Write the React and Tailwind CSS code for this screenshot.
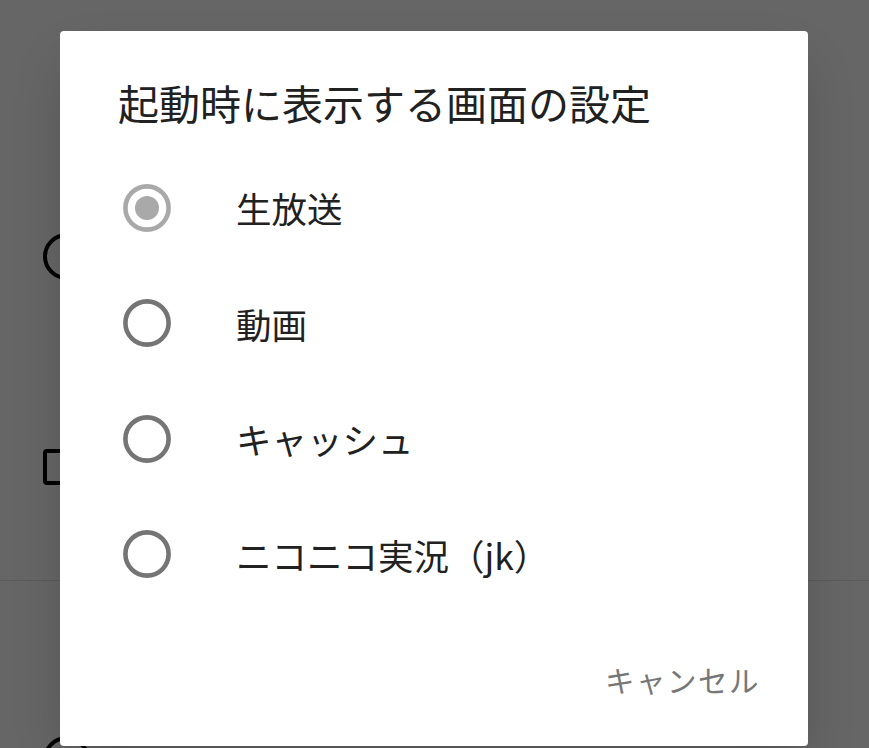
import React, { useState } from 'react';

const options = ['生放送', '動画', 'キャッシュ', 'ニコニコ実況（jk）'];

function Radio({ checked }) {
  return (
    <svg width="48" height="48" viewBox="0 0 48 48">
      <circle cx="24" cy="24" r="21.6" fill="none" stroke={checked ? '#a9a9a9' : '#757575'} strokeWidth="4.6" />
      {checked && <circle cx="24" cy="24" r="12" fill="#a9a9a9" />}
    </svg>
  );
}

export default function App() {
  const [selected, setSelected] = useState(0);

  return (
    <div
      className="relative w-[869px] h-[748px] overflow-hidden bg-white"
      style={{ fontFamily: '"Noto Sans CJK JP", "Noto Sans", sans-serif' }}
    >
      {/* 背景の設定画面 */}
      <div className="flex flex-col pl-[43px]">
        <div className="mt-[233px] w-[47px] h-[47px] rounded-full border-[4px] border-black" />
        <div className="mt-[169px] w-[36px] h-[36px] rounded-[4px] border-[4px] border-black" />
        <div className="mt-[95px] -ml-[43px] w-[869px] h-px bg-[#e3e3e3]" />
        <div className="mt-[155px] w-[47px] h-[47px] rounded-full border-[4px] border-black" />
      </div>

      {/* スクリム */}
      <div className="absolute inset-0 bg-black/60" />

      {/* ダイアログ */}
      <div className="absolute left-[60px] top-[31px] w-[748px] h-[715px] bg-white rounded-[4px] shadow-2xl flex flex-col">
        <h1 className="mt-[47px] pl-[58px] text-[41px] leading-[49px] text-[#212121] font-normal">
          起動時に表示する画面の設定
        </h1>

        <div className="mt-[23px] flex flex-col">
          {options.map((label, i) => (
            <button
              key={i}
              onClick={() => setSelected(i)}
              className="h-[115.5px] flex items-center pl-[63px] text-left"
            >
              <Radio checked={selected === i} />
              <span className="ml-[65px] text-[35.5px] leading-[43px] text-[#212121]">{label}</span>
            </button>
          ))}
        </div>

        <div className="mt-[50px] flex justify-end pr-[48px]">
          <button className="text-[29.5px] leading-[35px] tracking-[1.5px] text-[#777777]">キャンセル</button>
        </div>
      </div>
    </div>
  );
}
